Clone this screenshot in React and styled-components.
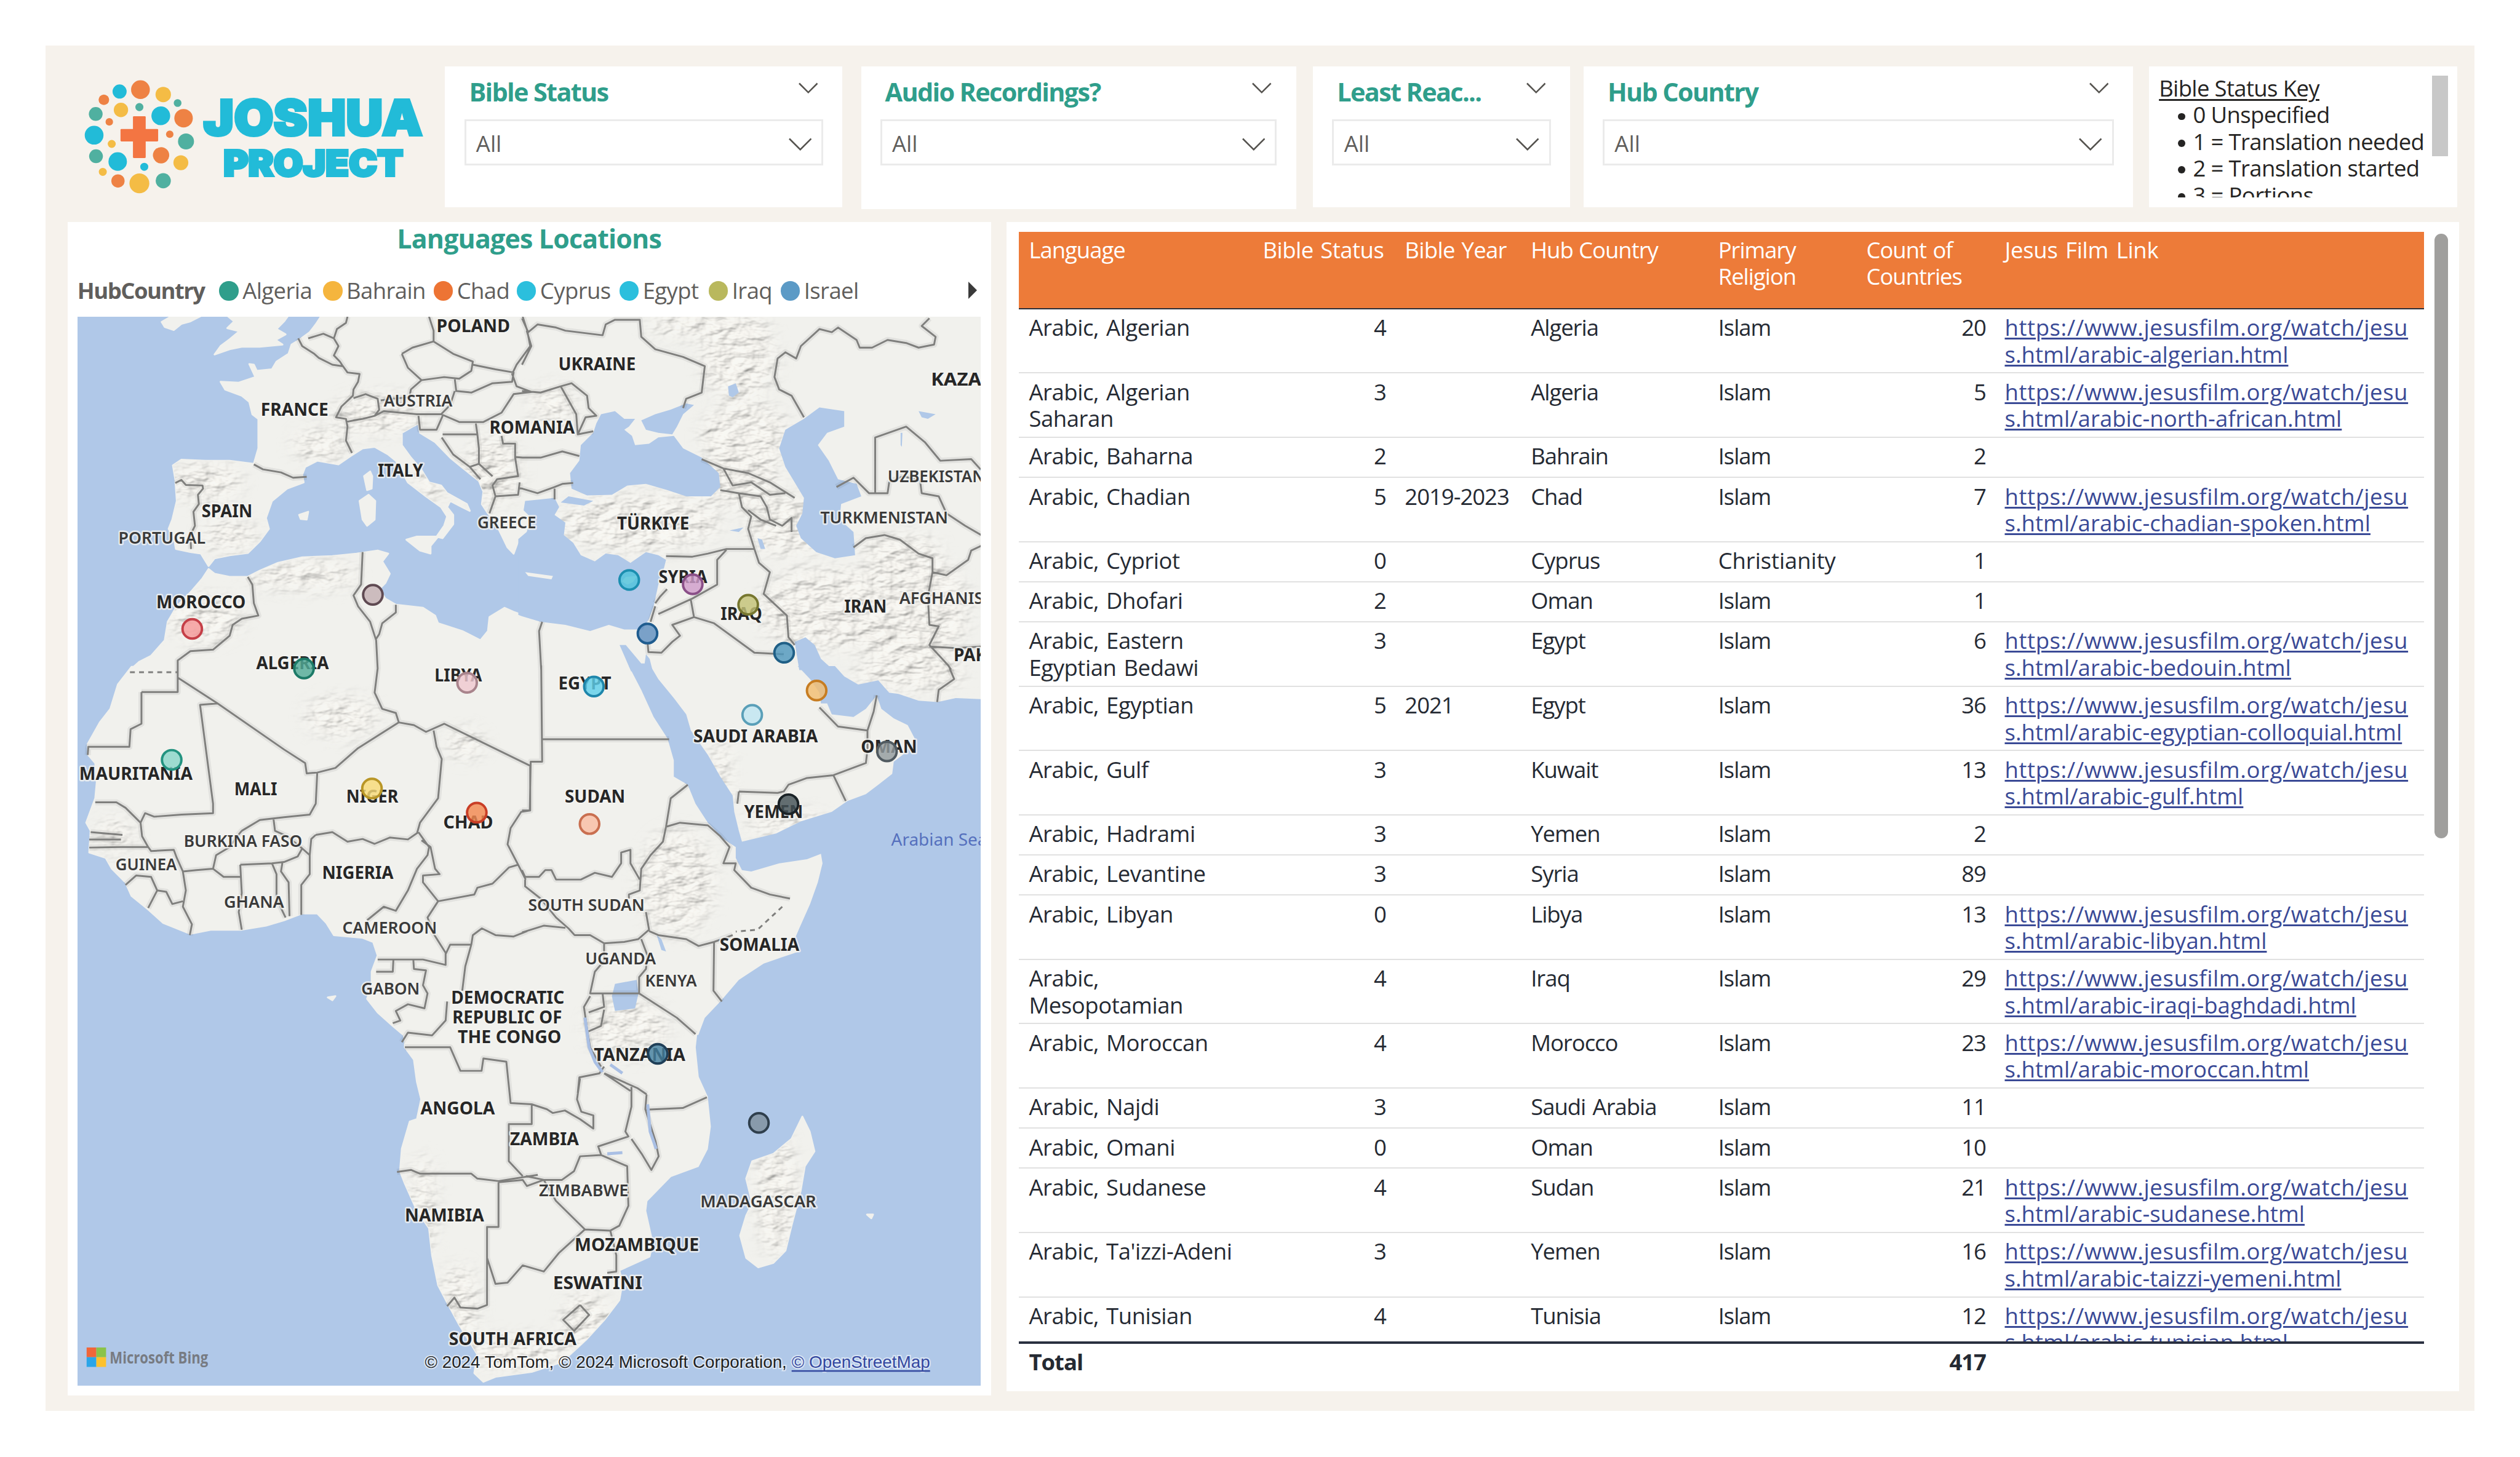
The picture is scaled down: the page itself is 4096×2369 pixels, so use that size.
import React from "react";
import styled, { createGlobalStyle } from "styled-components";

/* 1rem = 100 design pixels */
const Global = createGlobalStyle`
  html { font-size: 98.7px; }
  body { margin: 0; background: #fff; overflow: hidden; }
  *, *::before, *::after { box-sizing: border-box; }
`;

const sans = `"Open Sans", "Noto Sans", sans-serif`;

const Report = styled.main`
  width: 40rem;
  height: 22.5rem;
  margin: 0.745rem 0 0 0.75rem;
  padding: 0.35rem 0 0 0.365rem;
  background: #f6f2ec;
  font-family: ${sans};
  font-size: 0.37rem;
  line-height: 0.44rem;
  color: #252a33;
`;

const TopBar = styled.header`
  display: flex;
  align-items: flex-start;
  height: 2.56rem;
`;

const LogoBox = styled.div`
  width: 6.215rem;
  height: 2.33rem;
  svg { display: block; width: 100%; height: 100%; }
`;

const Card = styled.section`
  width: ${(p) => p.$w}rem;
  height: ${(p) => p.$h || 2.32}rem;
  margin-right: ${(p) => p.$gap || 0}rem;
  background: #fff;
`;

const Slicer = styled(Card)`
  padding: 0.16rem 0.32rem 0 0.315rem;
`;

const SlicerHead = styled.div`
  display: flex;
  justify-content: space-between;
  height: 0.5rem;
  padding: 0 0.085rem 0 0.08rem;
`;

const SlicerTitle = styled.h2`
  margin: 0;
  padding-top: 0.015rem;
  font-size: 0.42rem;
  line-height: 0.5rem;
  font-weight: 700;
  letter-spacing: -0.017rem;
  color: #2f9e8b;
  white-space: nowrap;
`;

const Chevron = styled.svg`
  display: block;
  width: ${(p) => p.$w}rem;
  height: ${(p) => p.$w / 2 + 0.03}rem;
  margin-top: ${(p) => p.$top || 0}rem;
  fill: none;
  stroke: #55534f;
  stroke-width: 2.6;
`;

const Dropdown = styled.div`
  display: flex;
  align-items: center;
  justify-content: space-between;
  height: 0.76rem;
  margin-top: 0.21rem;
  padding: 0.045rem 0.16rem 0 0.165rem;
  border: 0.035rem solid #ebebeb;
  color: #605e5c;
`;

const KeyCard = styled(Card)`
  display: flex;
  justify-content: space-between;
  padding: 0.14rem 0.15rem 0 0.16rem;
`;

const KeyText = styled.div`
  height: 2.02rem;
  overflow: hidden;
  letter-spacing: -0.0065rem;
  white-space: nowrap;
  color: #252423;
`;

const KeyTitle = styled.div`
  text-decoration: underline;
  text-decoration-thickness: 0.035rem;
  text-underline-offset: 0.04rem;
`;

const KeyList = styled.ul`
  margin: 0;
  padding: 0;
  list-style: none;
`;

const KeyItem = styled.li`
  display: flex;
  align-items: center;
  padding-left: 0.31rem;
  &::before {
    content: "";
    width: 0.12rem;
    height: 0.12rem;
    margin: 0.05rem 0.13rem 0 0;
    border-radius: 50%;
    background: #252423;
  }
`;

const KeyScroll = styled.div`
  width: 0.27rem;
  height: 1.33rem;
  margin-top: 0.01rem;
  background: #c8c8c8;
`;

const Body = styled.div`
  display: flex;
  align-items: flex-start;
  gap: 0.26rem;
`;

const MapPanel = styled.section`
  width: 15.205rem;
  height: 19.33rem;
  padding: 0 0.165rem 0 0.16rem;
  background: #fff;
`;

const MapTitle = styled.h2`
  margin: 0;
  padding-top: 0.02rem;
  height: 0.75rem;
  font-size: 0.435rem;
  line-height: 0.5rem;
  font-weight: 700;
  letter-spacing: -0.0085rem;
  text-align: center;
  color: #2f9e8b;
`;

const Legend = styled.div`
  display: flex;
  align-items: center;
  height: 0.81rem;
  padding: 0 0.065rem 0.05rem 0;
  color: #605e5c;
  letter-spacing: -0.006rem;
  white-space: nowrap;
`;

const LegendTitle = styled.span`
  width: 2.335rem;
  font-weight: 700;
  letter-spacing: -0.0155rem;
`;

const LegendItem = styled.span`
  display: flex;
  align-items: center;
  gap: 0.065rem;
  width: ${(p) => p.$w}rem;
  &::before {
    content: "";
    width: 0.32rem;
    height: 0.32rem;
    margin-top: 0.02rem;
    border-radius: 50%;
    background: ${(p) => p.$c};
  }
`;

const LegendNext = styled.span`
  margin-left: auto;
  border-left: 0.15rem solid #3a3a3a;
  border-top: 0.145rem solid transparent;
  border-bottom: 0.145rem solid transparent;
`;

const MapSvg = styled.svg`
  display: block;
  width: 14.88rem;
  height: 17.61rem;
  background: #b0c8e8;
`;

const TablePanel = styled.section`
  display: flex;
  width: 23.92rem;
  height: 19.26rem;
  padding: 0.16rem 0 0 0.2rem;
  background: #fff;
`;

const Table = styled.div`
  width: 23.135rem;
`;

const TableScroll = styled.div`
  width: 0.22rem;
  height: 9.95rem;
  margin: 0.04rem 0 0 0.18rem;
  border-radius: 0.11rem;
  background: #a09f9d;
`;

const Row = styled.div`
  display: grid;
  grid-template-columns: 3.85rem 2.34rem 2.075rem 3.085rem 2.44rem 2.28rem 7.065rem;
  height: ${(p) => p.$h}rem;
  padding-top: 0.085rem;
  border-bottom: 0.03rem solid #e1e1e1;
`;

const HeadRow = styled(Row)`
  background: #ed7b39;
  color: #fff;
  border-bottom-color: #2a2f3a;
`;

const TotalRow = styled(Row)`
  border-bottom: 0;
  border-top: 0.045rem solid #2a3040;
  font-weight: 700;
`;

const Rows = styled.div`
  height: 17rem;
  overflow: hidden;
`;

const Cell = styled.div`
  padding: 0 0.145rem 0 0.165rem;
  text-align: ${(p) => (p.$right ? "right" : "left")};
  letter-spacing: ${(p) => p.$ls ?? -0.0105}rem;
  word-spacing: ${(p) => p.$ws || 0.01}rem;
  white-space: pre;
`;

const Link = styled.a`
  color: #3a4a96;
  text-decoration: underline;
  text-decoration-thickness: 0.035rem;
  text-underline-offset: 0.035rem;
`;

const LinkHost = styled.span`
  letter-spacing: 0.006rem;
`;

const LinkRest = styled.span`
  letter-spacing: 0.0005rem;
`;

const legend = [
  ["Algeria", "#2f9e8b", 1.71],
  ["Bahrain", "#f5b53e", 1.82],
  ["Chad", "#ed7434", 1.37],
  ["Cyprus", "#2bbfdd", 1.69],
  ["Egypt", "#2bbfdd", 1.47],
  ["Iraq", "#b9b85d", 1.185],
  ["Israel", "#5b9ac6", 1.3],
];

const rows = [
  ["Arabic, Algerian", 4, "", "Algeria", "Islam", 20, "algerian"],
  ["Arabic, Algerian\nSaharan", 3, "", "Algeria", "Islam", 5, "north-african"],
  ["Arabic, Baharna", 2, "", "Bahrain", "Islam", 2, ""],
  ["Arabic, Chadian", 5, "2019-2023", "Chad", "Islam", 7, "chadian-spoken"],
  ["Arabic, Cypriot", 0, "", "Cyprus", "Christianity", 1, ""],
  ["Arabic, Dhofari", 2, "", "Oman", "Islam", 1, ""],
  ["Arabic, Eastern\nEgyptian Bedawi", 3, "", "Egypt", "Islam", 6, "bedouin"],
  ["Arabic, Egyptian", 5, "2021", "Egypt", "Islam", 36, "egyptian-colloquial"],
  ["Arabic, Gulf", 3, "", "Kuwait", "Islam", 13, "gulf"],
  ["Arabic, Hadrami", 3, "", "Yemen", "Islam", 2, ""],
  ["Arabic, Levantine", 3, "", "Syria", "Islam", 89, ""],
  ["Arabic, Libyan", 0, "", "Libya", "Islam", 13, "libyan"],
  ["Arabic,\nMesopotamian", 4, "", "Iraq", "Islam", 29, "iraqi-baghdadi"],
  ["Arabic, Moroccan", 4, "", "Morocco", "Islam", 23, "moroccan"],
  ["Arabic, Najdi", 3, "", "Saudi Arabia", "Islam", 11, ""],
  ["Arabic, Omani", 0, "", "Oman", "Islam", 10, ""],
  ["Arabic, Sudanese", 4, "", "Sudan", "Islam", 21, "sudanese"],
  ["Arabic, Ta'izzi-Adeni", 3, "", "Yemen", "Islam", 16, "taizzi-yemeni"],
  ["Arabic, Tunisian", 4, "", "Tunisia", "Islam", 12, "tunisian"],
];

/* Map sheets: origin and scale of each sheet's own grid */
const sheets = {
  a: [100, 350, 0.49745, 0.5102],
  b: [860, 350, 0.5102, 0.5102],
  c: [100, 1100, 0.49745, 0.44643],
  d: [860, 1100, 0.5102, 0.44643],
  e: [100, 1700, 0.9949, 0.40816],
};
const at = (s, x, y) => {
  const [ox, oy, sx, sy] = sheets[s];
  return [ox + x * sx, oy + y * sy];
};
const toPath = (s, text, close) =>
  text
    .split(";")
    .map((part) => {
      const n = part.trim().split(/[\s,]+/).map(Number);
      let d = "";
      for (let i = 0; i + 1 < n.length; i += 2) {
        const [x, y] = at(s, n[i], n[i + 1]);
        d += (i ? "L" : "M") + x.toFixed(1) + " " + y.toFixed(1);
      }
      return d + (close ? "Z" : "");
    })
    .join("");

const land = [
  ["a", "335 352 365 335 470 330 430 350 400 358 375 378 345 368; 550 330 575 350 552 372 592 382 560 408 530 430 510 457 560 440 600 432 660 432 735 425 712 410 745 392 715 375 740 350 755 330"],
  ["a", "865 330 845 360 825 385 790 410 765 425 755 455 715 480 700 505 650 510 640 490 625 488 645 530 590 548 530 545 545 570 600 590 625 610 635 650 655 665 655 760 640 810 560 800 480 800 400 797 372 815 380 860 385 930 370 990 358 1020 375 1045 382 1085 430 1095 465 1100 490 1140 510 1115 560 1105 620 1098 660 1060 690 1020 680 985 700 930 750 890 805 870 800 845 810 820 850 800 920 812 960 785 1000 760 1040 755 1085 780 1110 800 1150 870 1210 915 1260 950 1280 980 1270 1010 1245 1045 1265 1050 1300 1005 1300 975 1280 950 1290 930 1330 950 1355 962 1345 940 1280 905 1260 880 1220 870 1195 830 1160 790 1130 750 1130 710 1165 690 1185 680 1190 710 1240 740 1290 790 1340 830 1385 865 1400 900 1395 940 1415 970 1440 1000 1460 1040 1480 1080 1500 1100 1515 1060 1540 1050 1540 330"],
  ["a", "990 930 1020 910 1042 930 1040 990 1015 1010 1000 990; 1005 850 1025 835 1032 850 1030 890 1015 895; 1145 1055 1180 1045 1250 1045 1225 1075 1225 1100 1190 1090; 790 975 820 965 815 990 795 988"],
  ["a", "490 1150 510 1165 560 1175 620 1175 660 1155 720 1130 800 1112 900 1108 980 1100 1050 1090 1085 1100 1065 1125 1090 1165 1075 1195 1055 1215 1075 1245 1110 1265 1200 1275 1240 1300 1250 1325 1330 1350 1390 1380 1415 1350 1420 1305 1470 1275 1500 1288 1540 1302 1540 1476 230 1476 260 1450 300 1430 345 1380 355 1320 385 1270 435 1220 470 1180"],
  ["b", "-4 330 1490 330 1490 1476 -4 1476"],
  ["c", "235 -5 190 60 165 150 130 200 90 280 92 320 115 350 120 420 115 480 85 570 100 600 95 680 150 700 170 740 215 790 235 840 290 890 340 940 430 980 500 965 600 965 680 950 740 930 800 905 850 905 880 940 905 985 1000 995 1035 1010 1050 1060 1030 1120 1030 1170 1015 1220 1050 1270 1100 1320 1132 1350 1540 1350 1540 -5; 885 1215 910 1210 900 1225"],
  ["d", "-4 -5 1490 -5 1490 1350 -4 1350"],
  ["e", "566 -5 570 30 570 60 585 110 590 200 597 270 590 350 578 360 565 470 562 560 570 610 590 720 610 790 615 900 625 1020 640 1090 660 1180 690 1300 685 1375 700 1410 720 1390 780 1370 830 1330 870 1240 900 1160 925 1080 930 1010 925 960 975 905 980 850 968 720 970 680 1010 580 1055 540 1070 470 1075 380 1070 260 1055 180 1050 60 1053 -5"],
  ["e", "1228 340 1240 400 1248 480 1232 540 1225 640 1210 780 1200 880 1180 930 1155 948 1135 910 1125 820 1135 740 1145 690 1135 590 1145 520 1180 490 1210 430; 1335 735 1345 735 1342 750"],
];

const water = [
  ["b", "-12 1053 15 1030 30 985 5 960 10 930 60 925 105 920 120 950 105 975 140 1000 135 1040 165 1065 190 1105 235 1125 270 1100 310 1105 350 1130 400 1095 440 1105 465 1120 455 1160 440 1200 425 1270 410 1310 390 1345 330 1345 280 1330 220 1350 140 1330 60 1320 0 1302 -12 1298"],
  ["b", "125 935 150 915 230 930 200 945"],
  ["b", "255 650 300 640 330 665 365 665 345 690 330 700 355 720 365 750 410 745 440 725 490 720 520 760 580 790 635 840 640 885 610 915 530 915 470 895 400 875 340 880 290 910 210 912 160 890 155 840 185 800 190 750 230 710 240 680"],
  ["b", "385 670 430 650 480 635 530 615 555 620 520 650 500 690 485 715 440 710 400 700"],
  ["b", "910 665 960 628 1040 640 1040 690 985 710 955 750 990 800 1020 860 1080 875 1095 915 1030 940 1025 990 1070 1030 1075 1105 1010 1115 950 1095 900 1050 885 1010 905 970 910 920 880 870 850 820 830 760 850 700"],
  ["b", "315 1395 335 1395 385 1455 396 1455 400 1425 412 1440 422 1480 352 1480"],
  ["b", "880 1385 915 1370 945 1395 965 1440 1005 1476 895 1476"],
  ["b", "1280 640 1335 650 1310 665 1290 660; 670 1025 715 1015 700 1030; 760 1050 775 1055 785 1085 770 1085; 665 560 690 550 700 580 680 595 668 590; 1222 710 1228 710 1226 755 1222 750"],
  ["d", "345 -8 385 80 425 180 470 260 490 340 490 400 535 430 560 500 600 570 650 630 690 660 690 700 710 745 740 750 830 720 920 705 965 685 970 720 955 790 930 870 895 960 880 1000 895 1045 830 1070 780 1090 700 1150 640 1230 590 1290 567 1360 1490 1360 1490 115 1400 110 1340 125 1280 120 1215 95 1185 90 1150 45 1085 60 1040 30 1010 -8 890 -8 930 40 960 90 965 130 985 130 1000 170 1070 180 1110 150 1145 100 1160 150 1200 185 1245 210 1268 260 1240 310 1200 345 1195 390 1150 430 1110 465 1050 490 1000 530 900 565 820 610 710 640 700 600 685 530 680 470 640 400 600 320 545 230 530 170 490 110 440 40 415 -8"],
  ["d", "300 1165 370 1150 376 1200 365 1255 300 1265 290 1210; 435 985 450 1000 465 1045 450 1040"],
];

const isles = [
  ["b", "10 1160 100 1172 95 1183 20 1172; 322 1190 335 1175 372 1172 358 1192 340 1200"],
];

const borders = [
  ["a", "640 812 670 828 730 838 770 855 815 852; 380 872 400 862 415 878 470 880 472 890 455 910 458 940 440 965 445 1010 430 1040 432 1085; 787 405 800 430 840 455 855 468 900 490 935 495 950 515 990 520 985 545 970 570 968 590 930 625 912 660 945 665 950 690 945 735 965 775; 820 405 870 390 905 405 920 430 905 460 925 480 935 495; 905 405 915 375 945 355 950 335; 970 598 1010 585 1050 600 1055 635 1040 655 1000 665 970 670 945 675; 1130 455 1165 435 1235 415 1300 455 1365 480 1360 510 1320 535 1270 530 1195 540 1150 500 1130 455; 1220 335 1235 380 1235 415; 1195 540 1160 570 1155 595 1100 600 1060 605; 1365 490 1440 505 1500 515 1495 545 1430 550 1360 580 1310 575 1305 535; 1305 575 1290 620 1260 650 1180 650 1070 640 1040 655; 1260 650 1320 675 1400 675 1460 645 1500 585 1560 578; 1530 335 1545 380 1555 430 1510 490 1495 520 1510 560 1560 578; 1185 655 1190 700 1245 700 1265 655; 1265 715 1380 715 1385 760 1385 810 1355 820 1300 780 1262 725; 1380 715 1375 680; 1460 720 1465 745 1505 745 1505 790 1515 850 1445 860 1430 880 1440 915 1515 910 1520 870; 1505 788 1530 790; 1385 810 1430 850; 1355 820 1390 860; 1440 915 1420 970; 1515 888 1530 890"],
  ["a", "620 1175 635 1200 640 1260 655 1300 600 1310 570 1330 560 1365 505 1410 430 1415 388 1445 388 1500; 1000 1095 995 1200 970 1235 985 1270 1025 1320 1045 1380 1050 1472; 1110 1265 1110 1290 1065 1325 1055 1360 1045 1375"],
  ["b", "0 340 20 385 50 360 110 370 140 380 260 395 270 360 300 345 380 345 385 400 430 440 520 465 590 495 580 580 530 600 520 630; 15 380 30 430 0 490; 0 575 60 580 125 560 160 550 210 590 215 630 240 655 205 660 180 715; 125 560 175 650 180 715 230 705; 0 790 60 790 130 770 185 785; 0 890 50 905 105 885 130 875 165 872; 105 890 105 925; 580 795 650 825 730 840 800 870 880 920; 910 660 870 590 830 570 815 530 825 470 850 450 885 470 900 430 960 375 1000 385 1020 370 1080 410 1090 435 1130 435 1180 410 1240 420 1280 435 1330 425 1335 400 1290 365 1315 340; 1140 905 1140 725 1240 690 1300 740 1350 800 1450 795 1482 830; 1015 885 1070 855 1120 905 1180 905 1185 870 1230 850 1285 865 1290 905 1345 915 1370 970 1430 1010 1482 1040; 1070 1080 1110 1050 1170 1040 1220 1055 1280 1100 1325 1115 1325 1160 1370 1170 1440 1120 1450 1090 1482 1075; 1325 1160 1310 1240 1315 1330 1345 1335 1315 1395 1375 1460 1385 1475; 1315 1400 1400 1405 1482 1400"],
  ["b", "640 895 700 905 710 950 740 980 730 1020 750 1085; 700 905 770 915 790 950 800 990 840 1010 870 985 870 1030; 730 960 770 990 820 1010; 650 825 680 880 740 870 800 910 850 905; 465 1108 550 1110 600 1100 660 1085 750 1085; 660 1088 630 1120 630 1200 550 1245 440 1295; 430 1270 415 1320; 430 1260 445 1240 468 1215; 545 1250 555 1305 620 1325 750 1420 845 1425; 555 1305 485 1330 510 1365 485 1385 450 1420 408 1418 405 1385; 750 1085 765 1130 800 1160 780 1230 855 1300 860 1370 880 1395; 65 1320 55 1350 62 1475"],
  ["c", "268 88 388 88 388 -20; 268 88 268 205 232 225 228 290 92 290 90 320; 388 35 520 130 740 300 810 350 815 388 850 385; 520 130 462 135 505 500 505 535 400 540 310 548 280 535 265 570; 850 385 910 368 985 295 1120 200; 1050 0 1040 90 1065 150 1110 165 1120 200; 1120 200 1170 210 1210 235 1270 205 1555 360; 1235 230 1245 290 1262 335 1250 480 1190 570 1180 610; 850 385 845 500 825 540 740 550 700 555 660 560 600 600 585 620; 845 615 900 605 950 640 1000 630 1040 648 1090 625 1150 632 1185 605; 705 555 710 600 750 620 800 665; 585 620 560 660 515 690 505 740 540 770 595 770; 595 725 700 720 740 715 785 695 800 665 825 690 830 630 845 615; 595 725 600 830 590 900 600 965; 700 720 715 760 715 850 745 920; 735 715 730 750 755 790 758 915; 825 690 825 760 797 800 797 910; 115 495 185 495 215 515 265 570 270 620 290 660 200 660 95 662; 100 605 205 615; 95 632 200 632; 290 660 300 675 375 670 385 700 405 750 415 820 405 880 435 945 428 985; 405 750 450 745 505 740; 215 800 250 765 300 770 320 820 290 885; 320 820 350 825 370 870 405 860"],
  ["c", "1185 605 1220 660 1215 690 1180 740 1150 820 1110 895 1070 880 1015 930; 1195 635 1225 660 1240 740 1255 760 1200 765 1200 790 1250 860 1215 920 1235 980 1275 1050 1275 1095 1200 1075 1050 1075; 1250 860 1370 835 1380 810 1430 795 1485 735 1515 725; 1555 360 1555 525 1525 530 1490 590 1480 650 1515 725 1540 780; 1275 1055 1290 1020 1360 1020 1365 985 1395 960 1440 985 1500 990 1545 970; 1360 1020 1340 1100 1330 1190; 1280 1230 1275 1300 1230 1355 1150 1345 1130 1380; 1045 1120 1100 1120 1102 1075; 1168 1075 1170 1110 1210 1115 1200 1170 1215 1200 1205 1255 1150 1240 1110 1265 1125 1300 1100 1310"],
  ["d", "62 -10 65 345 28 345 25 525 0 525; 65 262 475 262; 535 430 480 480 465 585 455 640 415 690 385 740 380 820 345 835 345 850; 465 585 510 570 600 580 640 620 670 660 650 720 690 720 685 745 740 810 800 835 865 850; 680 985 620 1010 570 1025 530 1000 440 985 410 970; 0 745 10 770 55 770 75 745 95 745 110 780 190 780 235 755 290 770 320 720 320 680 350 670 350 720 380 780; 10 780 10 805 60 850 110 920 150 960 170 985 220 985 265 1015 330 1010 375 1000 410 965 400 900; 0 975 70 950 140 958; 265 1015 265 1080 235 1120 220 1200 378 1200; 385 1000 405 1060 400 1110 378 1140 378 1200 500 1290 560 1350; 620 1010 618 1190 645 1230; 220 1210 200 1250 210 1330 220 1400 255 1470; 215 1270 265 1250 260 1200; 265 1260 255 1320 215 1340"],
  ["d", "180 1568 185 1510 250 1495 265 1470; 265 1495 350 1560; 700 455 825 460 845 455 860 430 920 405 1005 395 1110 350 1115 300 1115 230; 1005 395 1045 490; 700 455 695 500; 960 145 1020 215 1115 230 1135 160 1145 100; 1380 0 1395 40 1345 80 1340 125"],
  ["e", "570 60 645 60 662 155 697 155 700 105 738 118 745 285 780 290 780 370 742 370 742 520 765 580; 780 290 805 310 815 325 835 315 860 350 882 388 882 335 862 320 855 270 860 185; 900 165 955 225 970 250; 945 220 945 300 935 400 940 420 890 460 895 495 860 500 850 560 830 595 800 595 770 580; 557 563 580 555 595 570 680 570 690 590 725 600 790 575; 725 605 725 785 706 785 706 1100 690 1115 662 1110 652 1070 640 1105; 725 605 765 595 772 620 800 595 820 680 845 740 868 795; 706 910 720 1015 740 1010 765 940 800 965 825 890 868 795 910 800; 895 495 938 540 940 700 925 780 910 800 920 900 920 965 905 970; 970 250 968 310 985 440 990 500 978 555 962 490 945 430; 970 312 1030 305 1070 262; 860 1100 875 1140 850 1205 832 1160 860 1100"],
];

const dashed = [
  ["a", "230 1483 388 1483"],
  ["d", "840 880 760 965 690 972"],
];

const relief = [
  ["a", 1050, 650, 150, 60], ["a", 480, 870, 120, 60], ["a", 560, 1040, 90, 50], ["a", 1230, 870, 50, 50],
  ["a", 860, 750, 90, 50], ["a", 1430, 830, 90, 110], ["a", 480, 1310, 120, 70], ["a", 800, 1170, 180, 45],
  ["b", 100, 620, 70, 60], ["b", 380, 1000, 260, 90], ["b", 700, 860, 130, 90], ["b", 860, 1010, 130, 90],
  ["b", 720, 720, 140, 110], ["b", 700, 470, 120, 130], ["b", 600, 360, 200, 40],
  ["b", 990, 1280, 230, 130], ["b", 1250, 1280, 190, 190], ["b", 1220, 1090, 130, 50],
  ["d", 500, 790, 120, 190], ["d", 640, 380, 30, 130], ["d", 850, 570, 130, 40], ["d", 1250, 20, 180, 60],
  ["d", 340, 1330, 130, 100], ["c", 180, 620, 60, 60], ["c", 930, 180, 120, 70], ["c", 1340, 280, 60, 50],
  ["e", 1185, 650, 32, 250], ["e", 600, 700, 20, 200], ["e", 660, 1100, 30, 160], ["e", 870, 1180, 40, 130], ["e", 750, 1290, 90, 60],
];

const labels = [
  ["a", "POLAND", 1245, 1488, 385, 1], ["a", "FRANCE", 663, 887, 655, 1], ["a", "AUSTRIA", 1070, 1297, 625],
  ["a", "ITALY", 1050, 1200, 852, 1], ["a", "SPAIN", 467, 635, 983, 1], ["a", "PORTUGAL", 192, 480, 1068],
  ["a", "MOROCCO", 317, 613, 1277, 1], ["a", "ALGERIA", 648, 888, 1473, 1], ["a", "LIBYA", 1238, 1395, 1512, 1],
  ["a", "ROMANIA", 1420, 1702, 712, 1], ["a", "GREECE", 1380, 1575, 1018],
  ["b", "UKRAINE", 117, 367, 508, 1], ["b", "KAZAKHSTAN", 1320, 1730, 557, 1], ["b", "UZBEKISTAN", 1180, 1494, 870],
  ["b", "TURKMENISTAN", 963, 1375, 1003], ["b", "TÜRKIYE", 307, 540, 1022, 1], ["b", "SYRIA", 441, 598, 1195, 1],
  ["b", "IRAQ", 641, 775, 1315, 1], ["b", "IRAN", 1040, 1177, 1291, 1], ["b", "AFGHANISTAN", 1218, 1594, 1262],
  ["b", "PAKISTAN", 1393, 1665, 1448, 1], ["b", "EGYPT", 117, 288, 1538, 1],
  ["c", "MAURITANIA", 62, 437, 412, 1], ["c", "MALI", 575, 717, 468, 1], ["c", "NIGER", 946, 1118, 497, 1],
  ["c", "CHAD", 1267, 1432, 592, 1], ["c", "BURKINA FASO", 408, 800, 660], ["c", "GUINEA", 182, 385, 745],
  ["c", "NIGERIA", 866, 1102, 778, 1], ["c", "GHANA", 541, 740, 885], ["c", "CAMEROON", 933, 1246, 979],
  ["c", "GABON", 996, 1189, 1205], ["c", "DEMOCRATIC", 1293, 1668, 1238, 1], ["c", "REPUBLIC OF", 1297, 1660, 1310, 1],
  ["c", "THE CONGO", 1315, 1658, 1383, 1],
  ["d", "SAUDI ARABIA", 553, 955, 273, 1], ["d", "OMAN", 1094, 1275, 313, 1], ["d", "SUDAN", 138, 333, 497, 1],
  ["d", "YEMEN", 717, 907, 553, 1], ["d", "SOUTH SUDAN", 20, 396, 895], ["d", "SOMALIA", 638, 895, 1042, 1],
  ["d", "UGANDA", 204, 432, 1092], ["d", "KENYA", 397, 564, 1175], ["d", "TANZANIA", 232, 527, 1450, 1],
  ["e", "ANGOLA", 596, 719, 332, 1], ["e", "ZAMBIA", 744, 858, 455, 1], ["e", "ZIMBABWE", 792, 940, 662],
  ["e", "NAMIBIA", 570, 701, 762, 1], ["e", "MADAGASCAR", 1059, 1251, 706], ["e", "MOZAMBIQUE", 851, 1057, 883, 1],
  ["e", "ESWATINI", 815, 963, 1035, 1], ["e", "SOUTH AFRICA", 643, 854, 1262, 1],
];

const bubbles = [
  ["a", 1034, 1233, "#c3b0b3", "#5f4a52"], ["a", 436, 1343, "#f59a9a", "#c53f47"], ["a", 806, 1471, "#52ab97", "#1c7a67"],
  ["a", 1346, 1517, "#efc8d0", "#a9848c"], ["b", 346, 1185, "#4fc3dc", "#1c8fb0"], ["b", 551, 1199, "#d09ccb", "#8a4f88"],
  ["b", 730, 1265, "#c3c276", "#77772f"], ["b", 405, 1358, "#5f8fc0", "#1f5c8f"], ["b", 846, 1420, "#4f97bd", "#1f5f86"],
  ["b", 951, 1542, "#f2bd72", "#c77d22"], ["b", 232, 1529, "#5fd0ea", "#1e86ab"], ["c", 368, 338, "#8ad6c9", "#239380"],
  ["c", 1031, 444, "#f8da78", "#b99626"], ["c", 1378, 533, "#f38950", "#c93e26"], ["d", 743, 172, "#bfe5f1", "#5a9fb8"],
  ["d", 1178, 307, "#929b9d", "#505a60"], ["d", 860, 502, "#435055", "#1a2226"], ["d", 218, 575, "#f9bda4", "#c96f50"],
  ["d", 438, 1423, "#437f9f", "#1f3f58"], ["e", 1156, 365, "#7f909e", "#2f3f4d"],
];

const logoDots = [
  [385, 262, 34, "o"], [308, 271, 25.5, "b"], [469, 286, 28, "y"], [250, 312, 19, "o"], [522, 328, 14, "g"],
  [313, 362, 26, "y"], [381, 348, 14.5, "g"], [460, 391, 34, "b"], [220, 382, 25, "g"], [544, 403, 33.5, "o"],
  [270, 421, 13.5, "o"], [214, 487, 34, "b"], [493, 482, 13.5, "o"], [553, 518, 29, "g"], [279, 530, 14.5, "y"],
  [221, 591, 25, "g"], [461, 586, 29.5, "o"], [301, 617, 33.5, "b"], [534, 623, 27, "y"], [399, 643, 14.5, "b"],
  [246, 668, 14.5, "y"], [302, 713, 24, "o"], [381, 725, 36, "y"], [469, 712, 27.5, "g"],
];
const logoColors = { o: "#ee8244", b: "#22bbd8", y: "#f4bc45", g: "#50b0a0" };

function Logo() {
  return (
    <LogoBox>
      <svg viewBox="112 109 621.5 233">
        {logoDots.map(([x, y, r, c], i) => (
          <circle key={i} cx={60 + x / 2.24} cy={60 + y / 3} r={r / 2.2} fill={logoColors[c]} />
        ))}
        <rect x="219.5" y="191" width="21" height="69" rx="1.5" fill="#f37542" />
        <rect x="199" y="212" width="62" height="20.5" rx="1.5" fill="#f37542" />
        <g fill="#22bbd8" stroke="#22bbd8" strokeWidth="4" fontFamily="Inter, sans-serif" fontWeight="900">
          <text x="335.5" y="222" fontSize="81" textLength="361" lengthAdjust="spacingAndGlyphs">JOSHUA</text>
          <text x="368.5" y="289" fontSize="59" textLength="296" lengthAdjust="spacingAndGlyphs">PROJECT</text>
        </g>
      </svg>
    </LogoBox>
  );
}

function Filter({ title, w, gap, h }) {
  return (
    <Slicer $w={w} $gap={gap} $h={h}>
      <SlicerHead>
        <SlicerTitle>{title}</SlicerTitle>
        <Chevron $w={0.32} $top={0.105} viewBox="0 0 32 19"><path d="M1 1.5 16 16.5 31 1.5" /></Chevron>
      </SlicerHead>
      <Dropdown>
        <span>All</span>
        <Chevron $w={0.38} $top={0.02} viewBox="0 0 38 22"><path d="M1 1.5 19 19.5 37 1.5" /></Chevron>
      </Dropdown>
    </Slicer>
  );
}

function LocationsMap() {
  const draw = (list, close) => list.map(([s, t]) => toPath(s, t, close)).join("");
  const borderPath = draw(borders);
  return (
    <MapSvg viewBox="128 521 1488 1761" preserveAspectRatio="none">
      <defs>
        <clipPath id="landClip">
          {land.map(([s, t], i) => <path key={i} d={toPath(s, t, true)} />)}
        </clipPath>
        <filter id="relief" filterUnits="userSpaceOnUse" x="128" y="521" width="1488" height="1761">
          <feTurbulence type="fractalNoise" baseFrequency="0.032 0.06" numOctaves="3" seed="7" result="n" />
          <feDiffuseLighting in="n" surfaceScale="9" diffuseConstant="1.14" lightingColor="#f8f4ee" result="l">
            <feDistantLight azimuth="225" elevation="58" />
          </feDiffuseLighting>
          <feGaussianBlur in="SourceAlpha" stdDeviation="14" result="m" />
          <feComposite in="l" in2="m" operator="in" />
        </filter>
      </defs>
      {land.map(([s, t], i) => (
        <path key={i} d={toPath(s, t, true)} fill="#f1f1ed" stroke="#f1f1ed" strokeWidth="3" strokeLinejoin="round" />
      ))}
      <g clipPath="url(#landClip)">
        <g filter="url(#relief)" opacity="0.5">
          {relief.map(([s, x, y, rx, ry], i) => {
            const [cx, cy] = at(s, x, y);
            return <ellipse key={i} cx={cx} cy={cy} rx={rx * sheets[s][2]} ry={ry * sheets[s][3]} />;
          })}
        </g>
      </g>
      {water.map(([s, t], i) => <path key={i} d={toPath(s, t, true)} fill="#b0c8e8" />)}
      <path d={draw(isles, true)} fill="#f1f1ed" />
      <path d={borderPath} fill="none" stroke="#000" strokeOpacity="0.06" strokeWidth="10" strokeLinejoin="round" />
      <path d={borderPath} fill="none" stroke="#7f7f7d" strokeWidth="3" strokeLinejoin="round" />
      <path d={draw(dashed)} fill="none" stroke="#7f7f7d" strokeWidth="3" strokeDasharray="8 7" />
      <path d={toPath("e", "868 -60 875 60 885 120 897 160; 972 290 976 400 986 470; 905 490 930 485; 910 130 930 165")} fill="none" stroke="#a9bfe4" strokeWidth="5" />
      <g fontFamily='"Noto Sans", sans-serif' stroke="#f4f4f1" strokeOpacity="0.8" strokeWidth="5" paintOrder="stroke" strokeLinejoin="round">
        {labels.map(([s, text, x1, x2, y, bold]) => {
          const [x, by] = at(s, x1, y);
          return (
            <text key={text} x={x} y={by} fontSize={bold ? 29 : 28} fontWeight={bold ? 700 : 600}
              fill={bold ? "#262626" : "#3a3a3a"} textLength={(x2 - x1) * sheets[s][2]} lengthAdjust="spacingAndGlyphs">
              {text}
            </text>
          );
        })}
      </g>
      <text x="1468" y="1392" fontFamily='"Noto Sans", sans-serif' fontSize="28" fill="#5570bd" textLength="158" lengthAdjust="spacingAndGlyphs">Arabian Sea</text>
      {bubbles.map(([s, x, y, fill, stroke], i) => {
        const [cx, cy] = at(s, x, y);
        return <circle key={i} cx={cx} cy={cy} r="16" fill={fill} fillOpacity="0.82" stroke={stroke} strokeWidth="4" />;
      })}
      <rect x="143" y="2219" width="16" height="16" fill="#f0663a" />
      <rect x="159" y="2219" width="16" height="16" fill="#8bc34a" />
      <rect x="143" y="2235" width="16" height="16" fill="#2aa5e8" />
      <rect x="159" y="2235" width="16" height="16" fill="#fcc12d" />
      <text x="181" y="2245" fontFamily='"Open Sans", sans-serif' fontWeight="700" fontSize="27" fill="#777b82" textLength="162" lengthAdjust="spacingAndGlyphs">Microsoft Bing</text>
      <g fontFamily='"Liberation Sans", Arial, sans-serif' fontSize="28" stroke="#fff" strokeOpacity="0.55" strokeWidth="4" paintOrder="stroke">
        <text x="700" y="2253" fill="#222" textLength="596" lengthAdjust="spacingAndGlyphs">© 2024 TomTom, © 2024 Microsoft Corporation,</text>
        <text x="1304" y="2253" fill="#3448a0" textLength="228" lengthAdjust="spacingAndGlyphs">© OpenStreetMap</text>
      </g>
      <rect x="1304" y="2256.5" width="228" height="2.5" fill="#3448a0" />
    </MapSvg>
  );
}

export default function App() {
  return (
    <>
      <Global />
      <Report>
        <TopBar>
          <Logo />
          <Filter title="Bible Status" w={6.545} gap={0.305} />
          <Filter title="Audio Recordings?" w={7.165} gap={0.28} h={2.35} />
          <Filter title="Least Reac..." w={4.235} gap={0.22} />
          <Filter title="Hub Country" w={9.05} gap={0.265} />
          <KeyCard $w={5.075}>
            <KeyText>
              <KeyTitle>Bible Status Key</KeyTitle>
              <KeyList>
                <KeyItem>0 Unspecified</KeyItem>
                <KeyItem>1 = Translation needed</KeyItem>
                <KeyItem>2 = Translation started</KeyItem>
                <KeyItem>3 = Portions</KeyItem>
              </KeyList>
            </KeyText>
            <KeyScroll />
          </KeyCard>
        </TopBar>
        <Body>
          <MapPanel>
            <MapTitle>Languages Locations</MapTitle>
            <Legend>
              <LegendTitle>HubCountry</LegendTitle>
              {legend.map(([name, c, w]) => (
                <LegendItem key={name} $c={c} $w={w}>{name}</LegendItem>
              ))}
              <LegendNext />
            </Legend>
            <LocationsMap />
          </MapPanel>
          <TablePanel>
            <Table>
              <HeadRow $h={1.28}>
                <Cell>Language</Cell>
                <Cell $ls={-0.005} $ws={0.025}>Bible Status</Cell>
                <Cell $ls={-0.007} $ws={0.02}>Bible Year</Cell>
                <Cell>Hub Country</Cell>
                <Cell>{"Primary\nReligion"}</Cell>
                <Cell $ws={0.02}>{"Count of\nCountries"}</Cell>
                <Cell $ls={-0.003} $ws={0.035}>Jesus Film Link</Cell>
              </HeadRow>
              <Rows>
                {rows.map(([lang, status, year, hub, religion, count, slug]) => (
                  <Row key={lang} $h={slug ? 1.06 : 0.66}>
                    <Cell $ws={0.03} $ls={-0.0045}>{lang}</Cell>
                    <Cell $right>{status}</Cell>
                    <Cell>{year}</Cell>
                    <Cell $ws={0.03}>{hub}</Cell>
                    <Cell $ls={religion.length > 6 ? -0.001 : undefined}>{religion}</Cell>
                    <Cell $right>{count}</Cell>
                    <Cell>
                      {slug && (
                        <Link>
                          <LinkHost>{"https://www.jesusfilm.org/watch/jesu\n"}</LinkHost>
                          <LinkRest>{`s.html/arabic-${slug}.html`}</LinkRest>
                        </Link>
                      )}
                    </Cell>
                  </Row>
                ))}
              </Rows>
              <TotalRow $h={0.7}>
                <Cell>Total</Cell>
                <Cell /><Cell /><Cell /><Cell />
                <Cell $right>417</Cell>
                <Cell />
              </TotalRow>
            </Table>
            <TableScroll />
          </TablePanel>
        </Body>
      </Report>
    </>
  );
}
